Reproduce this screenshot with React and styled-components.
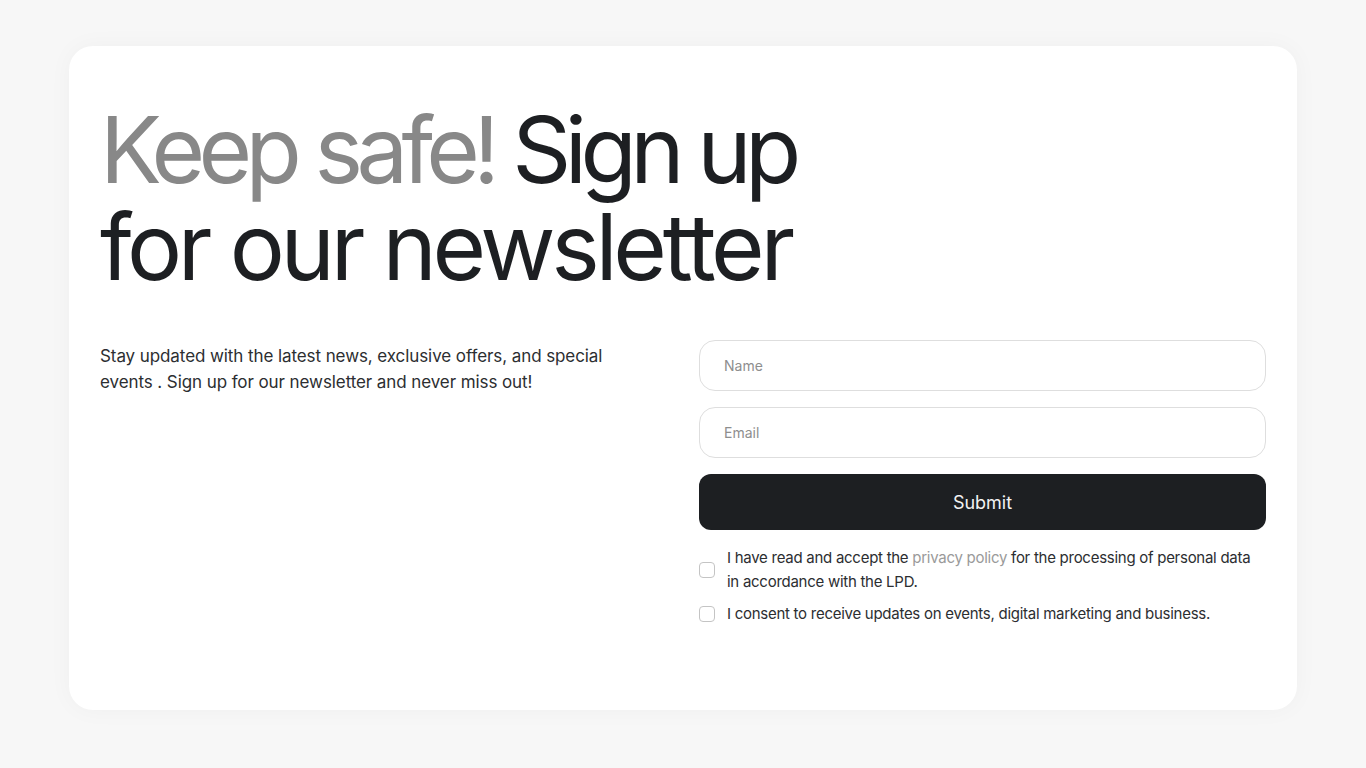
import React from "react";
import styled, { createGlobalStyle } from "styled-components";

const GlobalStyle = createGlobalStyle`
  html, body {
    margin: 0;
    padding: 0;
    background: #f7f7f7;
    font-family: Inter, "Noto Sans", sans-serif;
    -webkit-font-smoothing: antialiased;
  }
  * {
    box-sizing: border-box;
  }
`;

const Page = styled.div`
  min-height: 768px;
  padding: 46px 69px 58px;
`;

const Card = styled.section`
  background: #ffffff;
  border-radius: 24px;
  box-shadow: 0 0 24px rgba(0, 0, 0, 0.035);
  padding: 55px 31px 84px;
  height: 664px;
`;

const Heading = styled.h1`
  margin: 0 0 45px;
  font-size: 92px;
  font-weight: 400;
  line-height: 97px;
  color: #1d1f22;
  white-space: nowrap;
`;

const Line = styled.span`
  display: block;
  letter-spacing: ${(p) => p.$tracking};
`;

const Muted = styled.span`
  color: #888888;
`;

const Columns = styled.div`
  display: grid;
  grid-template-columns: 1fr 1fr;
  gap: 32px;
`;

const Lead = styled.p`
  margin: 3px 0 0;
  font-size: 17px;
  line-height: 26px;
  color: #2c2e31;
  max-width: 520px;
  letter-spacing: -0.005em;
`;

const Form = styled.form`
  display: flex;
  flex-direction: column;
  gap: 16px;
`;

const Input = styled.input`
  height: 51px;
  border: 1px solid #dedede;
  border-radius: 16px;
  padding: 0 24px;
  font-family: inherit;
  font-size: 14px;
  color: #1d1f22;
  outline: none;
  background: #fff;

  &::placeholder {
    color: #8e8e8e;
  }
`;

const Button = styled.button`
  height: 56px;
  border: none;
  border-radius: 12px;
  background: #1d1f22;
  color: #f2f2f2;
  font-family: inherit;
  font-size: 18px;
  cursor: pointer;
`;

const Checks = styled.div`
  display: flex;
  flex-direction: column;
  gap: 8px;
`;

const CheckRow = styled.label`
  display: flex;
  align-items: center;
  gap: 12px;
  font-size: 15px;
  line-height: 24px;
  color: #2c2e31;
  letter-spacing: -0.018em;
`;

const Box = styled.span`
  flex: 0 0 16px;
  width: 16px;
  height: 16px;
  border: 1px solid #c4c4c4;
  border-radius: 4px;
  background: #fff;
`;

const Policy = styled.a`
  color: #9a9a9a;
  text-decoration: none;
`;

export default function App() {
  return (
    <>
      <GlobalStyle />
      <Page>
        <Card>
          <Heading>
            <Line $tracking="-0.072em">
              <Muted>Keep safe!</Muted> Sign up
            </Line>
            <Line $tracking="-0.047em">for our newsletter</Line>
          </Heading>
          <Columns>
            <Lead>
              Stay updated with the latest news, exclusive offers, and special
              events . Sign up for our newsletter and never miss out!
            </Lead>
            <Form onSubmit={(e) => e.preventDefault()}>
              <Input placeholder="Name" />
              <Input placeholder="Email" type="email" />
              <Button type="submit">Submit</Button>
              <Checks>
                <CheckRow>
                  <Box />
                  <span>
                    I have read and accept the{" "}
                    <Policy href="#">privacy policy</Policy> for the processing
                    of personal data in accordance with the LPD.
                  </span>
                </CheckRow>
                <CheckRow>
                  <Box />
                  <span>
                    I consent to receive updates on events, digital marketing and
                    business.
                  </span>
                </CheckRow>
              </Checks>
            </Form>
          </Columns>
        </Card>
      </Page>
    </>
  );
}
